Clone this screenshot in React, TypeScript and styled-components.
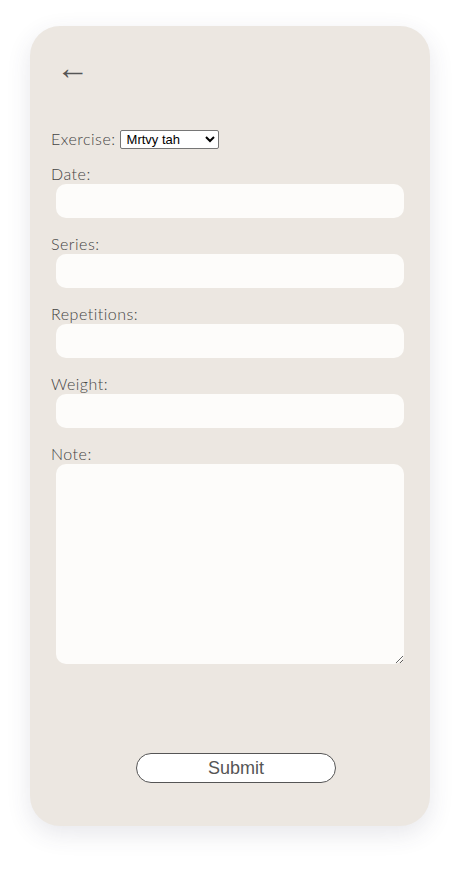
import React from "react";
import styled, { createGlobalStyle } from "styled-components";

const Global = createGlobalStyle`
  html, body { margin: 0; padding: 0; background: #ffffff; }
  body { font-family: "Lato", "Open Sans", sans-serif; }
`;

const Page = styled.div`
  padding: 26px 31px 44px 30px;
`;

const Card = styled.div`
  width: 400px;
  height: 800px;
  box-sizing: border-box;
  background: #ece7e1;
  border-radius: 30px;
  box-shadow: 0 8px 24px rgba(60, 60, 90, 0.12);
  padding: 28px 21px 0 21px;
  display: flex;
  flex-direction: column;
`;

const Back = styled.button`
  align-self: flex-start;
  background: none;
  border: none;
  padding: 0;
  margin: -5px 0 6px 5px;
  height: 36px;
  font-family: "Noto Sans", sans-serif;
  font-size: 33px;
  font-weight: 300;
  line-height: 36px;
  color: #555;
  cursor: pointer;
`;

const Form = styled.form`
  display: flex;
  flex-direction: column;
  margin-top: 38px;
  flex: 1;
`;

const InlineRow = styled.div`
  display: flex;
  align-items: center;
  gap: 4px;
  height: 20px;
  margin: 0 0 15px;
`;

const Label = styled.label`
  display: block;
  font-size: 16px;
  line-height: 20px;
  letter-spacing: 0.5px;
  color: #444;
  font-weight: 300;
`;

const Select = styled.select`
  font-family: "Liberation Sans", Arial, sans-serif;
  font-size: 13px;
  width: 99px;
  height: 19px;
  padding: 0 0 0 2px;
  border: 1px solid #767676;
  border-radius: 2px;
  background: #fff;
  color: #000;
`;

const Field = styled.div`
  display: flex;
  flex-direction: column;
  margin-bottom: 16px;
`;

const Input = styled.input`
  box-sizing: border-box;
  width: calc(100% - 10px);
  margin: 0 5px;
  height: 34px;
  border: none;
  border-radius: 10px;
  background: #fdfcfa;
  outline: none;
`;

const TextArea = styled.textarea`
  box-sizing: border-box;
  width: calc(100% - 10px);
  margin: 0 5px;
  height: 200px;
  border: none;
  border-radius: 10px;
  background: #fdfcfa;
  outline: none;
  resize: vertical;
`;

const Submit = styled.button`
  align-self: center;
  margin: 73px 0 0 12px;
  width: 200px;
  height: 30px;
  box-sizing: border-box;
  background: #fff;
  border: 1px solid #555;
  border-radius: 15px;
  font-family: "Liberation Sans", Arial, sans-serif;
  font-size: 18px;
  color: #555;
  cursor: pointer;
  padding: 0;
`;

const fields = ["Date:", "Series:", "Repetitions:", "Weight:"];

export default function App() {
  return (
    <>
      <Global />
      <Page>
        <Card>
          <Back type="button">←</Back>
          <Form onSubmit={(e) => e.preventDefault()}>
            <InlineRow>
              <Label>Exercise:</Label>
              <Select defaultValue="Mrtvy tah">
                <option>Mrtvy tah</option>
                <option>Drep</option>
                <option>Bench press</option>
              </Select>
            </InlineRow>
            {fields.map((f) => (
              <Field key={f}>
                <Label>{f}</Label>
                <Input type="text" />
              </Field>
            ))}
            <Field>
              <Label>Note:</Label>
              <TextArea />
            </Field>
            <Submit type="submit">Submit</Submit>
          </Form>
        </Card>
      </Page>
    </>
  );
}
